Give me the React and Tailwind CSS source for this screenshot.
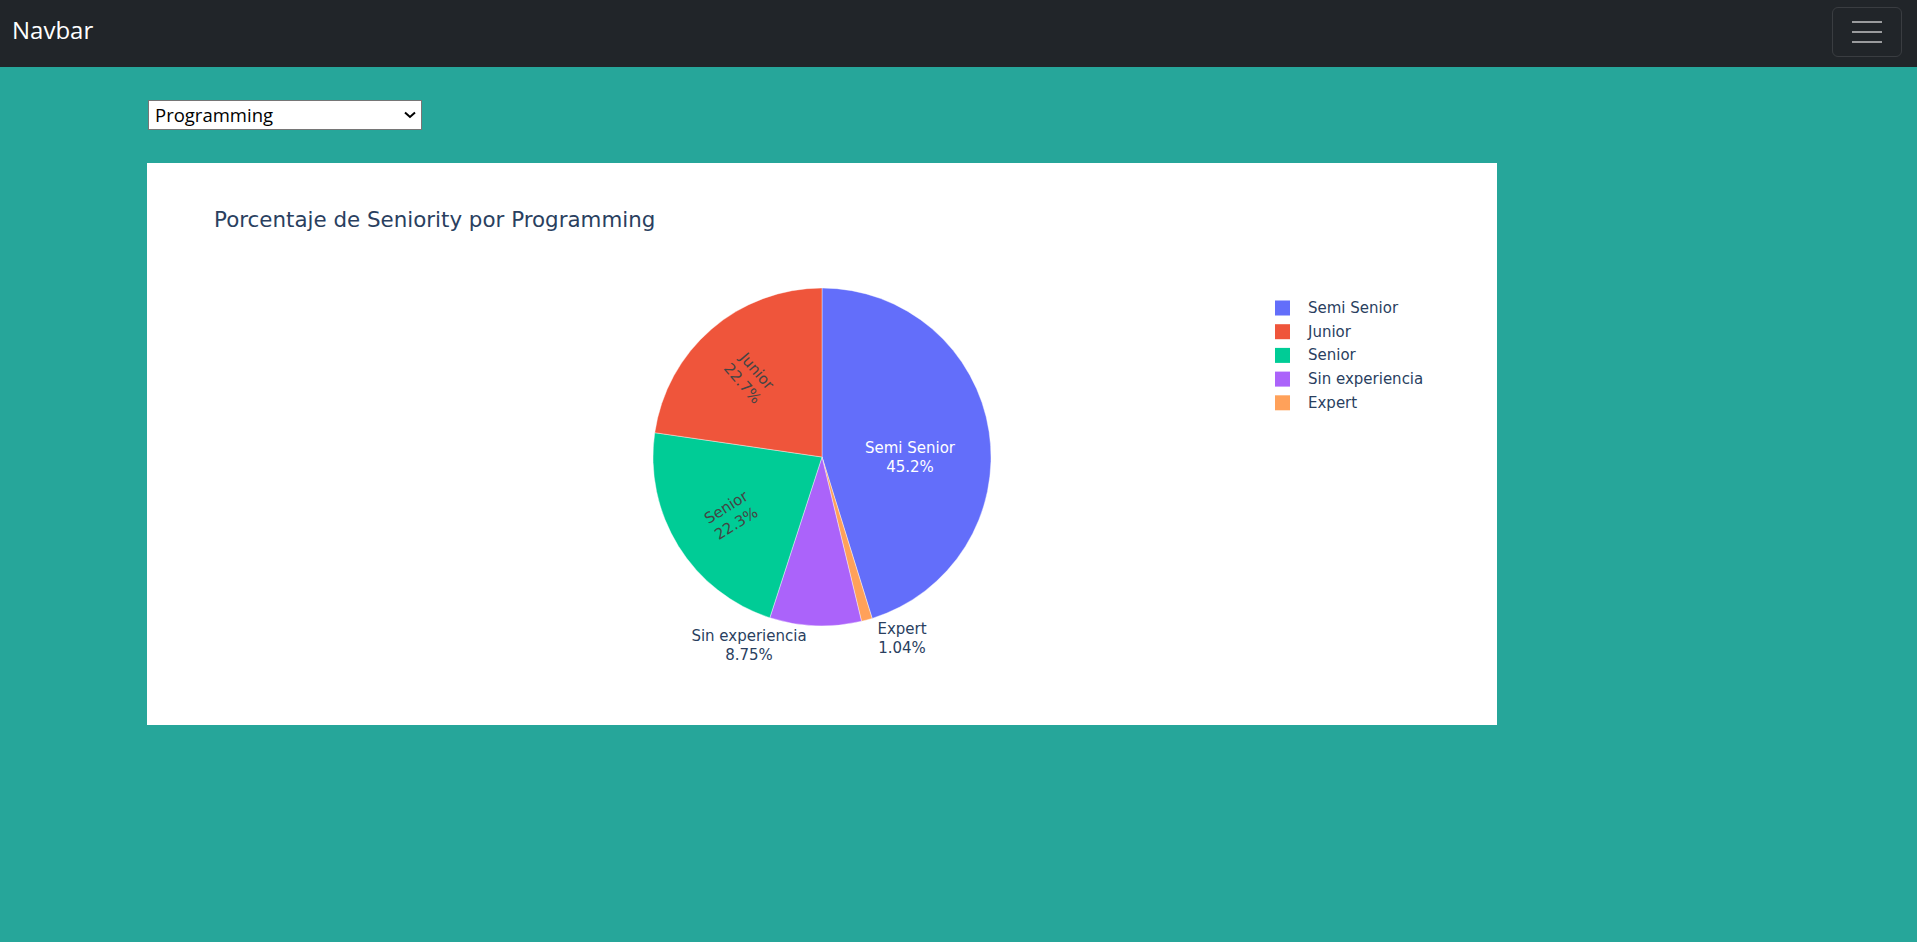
const SLICES = [
  { label: 'Semi Senior', pct: 45.2, text: '45.2%', color: '#636efa' },
  { label: 'Expert', pct: 1.04, text: '1.04%', color: '#ffa15a' },
  { label: 'Sin experiencia', pct: 8.75, text: '8.75%', color: '#ab63fa' },
  { label: 'Senior', pct: 22.3, text: '22.3%', color: '#00cc96' },
  { label: 'Junior', pct: 22.7, text: '22.7%', color: '#ef553b' },
]

const LEGEND = ['Semi Senior', 'Junior', 'Senior', 'Sin experiencia', 'Expert']

const CX = 675
const CY = 294
const R = 169

function pt(deg) {
  const a = (deg * Math.PI) / 180
  return [CX + R * Math.sin(a), CY - R * Math.cos(a)]
}

function slicePath(from, to) {
  const [x1, y1] = pt(from)
  const [x2, y2] = pt(to)
  const large = to - from > 180 ? 1 : 0
  return `M${CX},${CY} L${x1},${y1} A${R},${R} 0 ${large} 1 ${x2},${y2} Z`
}

function PieChart() {
  const total = SLICES.reduce((s, d) => s + d.pct, 0)
  let acc = 0
  const arcs = SLICES.map((d) => {
    const from = (acc / total) * 360
    acc += d.pct
    const to = (acc / total) * 360
    return { ...d, from, to }
  })
  const colorOf = (name) => SLICES.find((s) => s.label === name).color

  return (
    <svg width="1350" height="562" className="block" style={{ fontFamily: '"DejaVu Sans", verdana, arial, sans-serif' }}>
      <text x="67" y="64" fontSize="21.4" fill="#2a3f5f">
        Porcentaje de Seniority por Programming
      </text>

      {arcs.map((a) => (
        <path key={a.label} d={slicePath(a.from, a.to)} fill={a.color} stroke="#ffffff" strokeWidth="0.4" />
      ))}

      {/* inside labels */}
      <text x="763" y="290" fontSize="15" fill="#ffffff" textAnchor="middle">Semi Senior</text>
      <text x="763" y="309" fontSize="15" fill="#ffffff" textAnchor="middle">45.2%</text>

      <g transform="translate(603,214) rotate(49)">
        <text x="0" y="-4" fontSize="15" fill="#444444" textAnchor="middle">Junior</text>
        <text x="0" y="15" fontSize="15" fill="#444444" textAnchor="middle">22.7%</text>
      </g>

      <g transform="translate(584,352) rotate(-32)">
        <text x="0" y="-4" fontSize="15" fill="#444444" textAnchor="middle">Senior</text>
        <text x="0" y="15" fontSize="15" fill="#444444" textAnchor="middle">22.3%</text>
      </g>

      {/* outside labels */}
      <text x="602" y="478" fontSize="15" fill="#2a3f5f" textAnchor="middle">Sin experiencia</text>
      <text x="602" y="497" fontSize="15" fill="#2a3f5f" textAnchor="middle">8.75%</text>
      <text x="755" y="471" fontSize="15" fill="#2a3f5f" textAnchor="middle">Expert</text>
      <text x="755" y="490" fontSize="15" fill="#2a3f5f" textAnchor="middle">1.04%</text>

      {/* legend */}
      {LEGEND.map((name, i) => {
        const cy = 145 + i * 23.7
        return (
          <g key={name}>
            <rect x="1128" y={cy - 7.5} width="15" height="15" fill={colorOf(name)} />
            <text x="1161" y={cy + 5} fontSize="15" fill="#2a3f5f">{name}</text>
          </g>
        )
      })}
    </svg>
  )
}

export default function App() {
  return (
    <div className="min-h-[942px] bg-[#26a69a]" style={{ fontFamily: '"Open Sans", "Noto Sans", sans-serif' }}>
      <nav className="h-[67px] bg-[#212529] flex items-start justify-between pl-[12px] pr-[15px]">
        <span className="text-[24px] text-white leading-none mt-[18px]">Navbar</span>
        <button className="mt-[7px] w-[70px] h-[50px] rounded-md border border-[#3a3d41] flex flex-col items-center justify-center gap-[7.5px]">
          <span className="block w-[30px] h-[2.5px] bg-[#9a9b9d]" />
          <span className="block w-[30px] h-[2.5px] bg-[#9a9b9d]" />
          <span className="block w-[30px] h-[2.5px] bg-[#9a9b9d]" />
        </button>
      </nav>

      <div className="pl-[147px] pt-[33px]">
        <div className="ml-px w-[274px] h-[30px] bg-white border border-[#767676] flex items-center justify-between pl-[6px] pr-[5px]">
          <span className="text-[18.5px] text-black leading-none">Programming</span>
          <svg width="12" height="8" viewBox="0 0 12 8">
            <path d="M1 1.5 L6 6 L11 1.5" fill="none" stroke="#000" strokeWidth="2" />
          </svg>
        </div>

        <div className="mt-[33px] w-[1350px] h-[562px] bg-white">
          <PieChart />
        </div>
      </div>
    </div>
  )
}
